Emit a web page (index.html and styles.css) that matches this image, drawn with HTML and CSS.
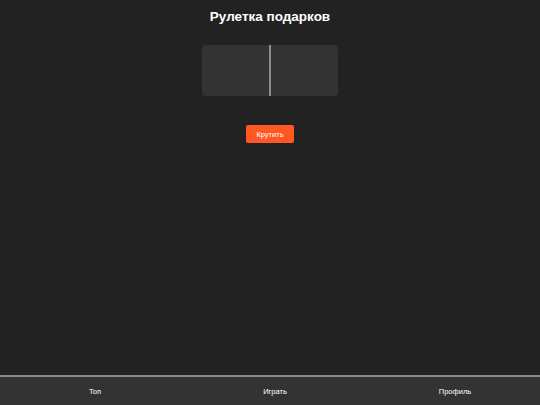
FILE: index.html
```html
<!DOCTYPE html>
<html lang="ru">
<head>
<meta charset="utf-8">
<title>Рулетка подарков</title>
<link rel="stylesheet" href="styles.css">
</head>
<body>
<div class="app">
  <main class="content">
    <h1 class="title">Рулетка подарков</h1>
    <div class="roulette"><div class="pointer"></div></div>
    <button class="spin">Крутить</button>
  </main>
  <nav class="nav">
    <a class="nav-item">Топ</a>
    <a class="nav-item">Играть</a>
    <a class="nav-item">Профиль</a>
  </nav>
</div>
</body>
</html>
```
FILE: styles.css
```css
html, body {
  margin: 0;
  padding: 0;
  background: #222222;
  font-family: "Liberation Sans", Arial, sans-serif;
  color: #ffffff;
}
.app {
  height: 405px;
  display: flex;
  flex-direction: column;
}
.content {
  flex: 1;
  display: flex;
  flex-direction: column;
  align-items: center;
}
.title {
  margin: 9px 0 0;
  font-size: 13.5px;
  font-weight: bold;
  line-height: 16px;
}
.roulette {
  margin-top: 20px;
  width: 136px;
  height: 51px;
  background: #333333;
  border-radius: 4px;
  display: flex;
  justify-content: center;
}
.pointer {
  width: 2px;
  height: 100%;
  background: #8c8c8c;
}
.spin {
  margin-top: 29px;
  height: 18px;
  padding: 0 10px;
  border: none;
  border-radius: 2px;
  background: #ff5722;
  color: #ffffff;
  font-family: "Liberation Sans", Arial, sans-serif;
  font-size: 7.5px;
}
.nav {
  height: 28px;
  border-top: 2px solid #8a8a8a;
  background: #333333;
  display: grid;
  grid-template-columns: repeat(3, 1fr);
  align-items: center;
}
.nav-item {
  padding-left: 10px;
  text-align: center;
  font-size: 7.5px;
  color: #ffffff;
}
```
